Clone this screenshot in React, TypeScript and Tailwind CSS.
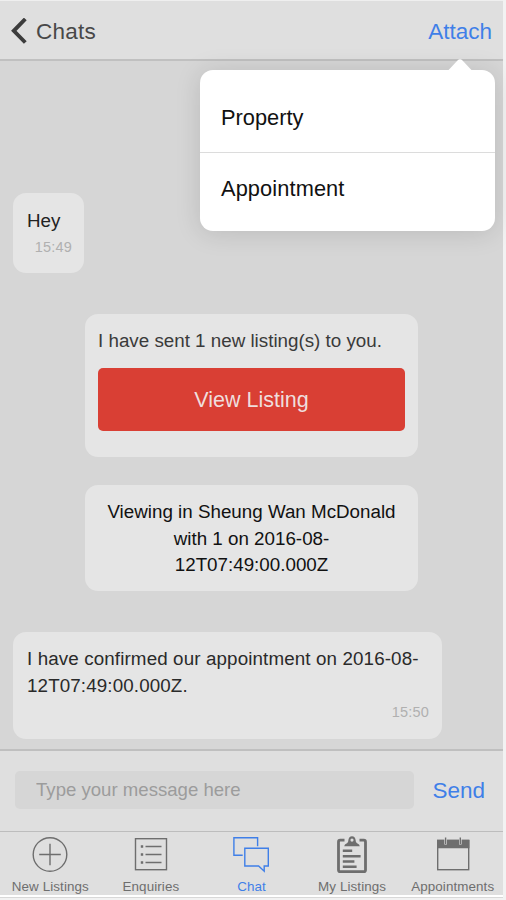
import type { ReactNode } from "react"
import clsx from "clsx"

const tabs = [
  { label: "New Listings", icon: <PlusIcon /> },
  { label: "Enquiries", icon: <ListIcon /> },
  { label: "Chat", icon: <ChatIcon />, active: true },
  { label: "My Listings", icon: <ClipboardIcon /> },
  { label: "Appointments", icon: <CalendarIcon /> },
]

function PlusIcon() {
  return (
    <svg width="36" height="36" viewBox="0 0 36 36" fill="none" stroke="currentColor" strokeWidth="1.4">
      <circle cx="18" cy="17.5" r="16.8" />
      <path d="M18 6.700v21.600M7.200 17.500h21.600" />
    </svg>
  )
}

function ListIcon() {
  return (
    <svg width="36" height="36" viewBox="0 0 36 36" fill="none" stroke="currentColor" strokeWidth="1.4">
      <rect x="2.5" y="1.7" width="31" height="31" />
      <path d="M12.500 9.500h16M12.500 17.500h16M12.500 25.500h16" />
      <path d="M7.800 9.500h2.400M7.800 17.500h2.400M7.800 25.500h2.400" strokeWidth="2.4" />
    </svg>
  )
}

function ChatIcon() {
  return (
    <svg width="36" height="36" viewBox="0 0 36 36" fill="none" stroke="currentColor" strokeWidth="1.4">
      <path d="M9.700 18.200H.9V.7H24.600V9.200" />
      <path d="M11.800 11.300H35.300V29H31.200V34.200L25.600 29H11.800Z" />
    </svg>
  )
}

function ClipboardIcon() {
  return (
    <svg width="36" height="38" viewBox="0 0 36 38" fill="none" stroke="currentColor">
      <path
        d="M10.500 4.200H6.200Q4.500 4.200 4.500 5.900V34Q4.500 35.700 6.200 35.700H29.800Q31.500 35.700 31.500 34V5.900Q31.500 4.200 29.800 4.200H25.500"
        strokeWidth="2.8"
      />
      <path
        d="M10.200 10.200Q10.200 8 13.300 6.900Q14.400 6.300 14.400 4.100Q14.800 .3 18 .3Q21.200 .3 21.600 4.100Q21.600 6.300 22.700 6.900Q25.800 8 25.800 10.200ZM18 2.500A1.600 1.600 0 1 0 18 5.700A1.600 1.600 0 1 0 18 2.500Z"
        fill="currentColor"
        fillRule="evenodd"
        stroke="none"
      />
      <path d="M8.800 14.800H18.200M8.800 20.200H26.600M8.800 25.500H20.400M8.800 30.800H22.600" strokeWidth="2.6" />
    </svg>
  )
}

function CalendarIcon() {
  return (
    <svg width="36" height="36" viewBox="0 0 36 36" fill="none" stroke="currentColor">
      <rect x="2.700" y="3.500" width="31" height="29.200" strokeWidth="1.400" />
      <path d="M2 2.800H34.400V11.300H2Z" fill="currentColor" stroke="none" />
      <path d="M10.600 1.800V7.600M25.300 1.800V7.600" stroke="#dfdfdf" strokeWidth="2.600" />
      <path d="M10.600 .6V6.900M25.300 .6V6.900" strokeWidth="1.400" />
    </svg>
  )
}

function Bubble({ className, children }: { className?: string; children: ReactNode }) {
  return (
    <div className={clsx("rounded-[13px] bg-[#e5e5e5] text-[18.8px] leading-[26.6px]", className)}>
      {children}
    </div>
  )
}

function AttachMenu() {
  return (
    <div className="absolute left-[200px] top-[70px] h-[161px] w-[295px] rounded-[13px] bg-white text-[21.8px] text-[#111] shadow-[0_2px_26px_rgba(0,0,0,0.13)]">
      <svg className="absolute left-[247px] -top-[11px]" width="26" height="12" viewBox="0 0 26 12">
        <path d="M0 12Q1.500 11 3 9.500L10.500 1.500Q13-.8 15.500 1.500L23 9.500Q24.500 11 26 12Z" fill="#fff" />
      </svg>
      <button className="flex h-[83px] w-full items-end border-b border-[#dcdcdc] pb-[19px] pl-[21px] leading-[30px]">Property</button>
      <button className="flex h-[78px] w-full items-center pb-[7px] pl-[21px] leading-[30px] tracking-[0.1px]">Appointment</button>
    </div>
  )
}

export default function App() {
  return (
    <div className="h-[900px] w-[506px] overflow-hidden bg-[#f2f2f2] font-['Liberation_Sans',Arial,sans-serif]">
      <div className="relative flex h-[895px] w-[503px] flex-col bg-[#d6d6d6]">
        <header className="flex h-[61px] items-center justify-between border-b-2 border-t border-b-[#c0c0c0] border-t-[#efefef] bg-[#dfdfdf] pl-[11px] pr-[11px] pt-[3px]">
          <button className="flex items-center gap-[9px] text-[22.5px] tracking-[0.25px] text-[#484848]">
            <svg width="16" height="27" viewBox="0 0 16 27" fill="none" stroke="#3c3c3c" strokeWidth="3.9">
              <path d="M14.300 1L2.800 12.800L14.300 24.500" />
            </svg>
            Chats
          </button>
          <button className="text-[22.5px] text-[#3f7fe8]">Attach</button>
        </header>

        <main className="flex flex-1 flex-col pt-[132px]">
          <Bubble className="ml-[13px] h-20 w-[71px] pl-[14px] pr-[12px] pt-[15px] text-[#222]">
            <p>Hey</p>
            <p className="-mt-px text-right text-[14.5px] tracking-[0.2px] text-[#b0b0b0]">15:49</p>
          </Bubble>

          <Bubble className="mt-[41px] ml-[85px] h-[143px] w-[333px] px-[13px] pt-[14px] text-[#3a3a3a]">
            <p className="whitespace-nowrap">I have sent 1 new listing(s) to you.</p>
            <button className="mt-[13px] h-[63px] w-full rounded-[5px] bg-[#d93f34] pt-[3px] text-[21.5px] text-[#efdedd]">
              View Listing
            </button>
          </Bubble>

          <Bubble className="mt-[28px] ml-[85px] h-[106px] w-[333px] pt-[14px] text-center text-[#111]">
            <p>
              Viewing in Sheung Wan McDonald
              <br />
              with 1 on 2016-08-
              <br />
              12T07:49:00.000Z
            </p>
          </Bubble>

          <Bubble className="mt-[41px] ml-[13px] h-[107px] w-[429px] px-[13px] pt-[14px] text-[#2a2a2a]">
            <p className="whitespace-nowrap pl-px tracking-[0.12px]">
              I have confirmed our appointment on 2016-08-
              <br />
              12T07:49:00.000Z.
            </p>
            <p className="text-right text-[14.5px] tracking-[0.2px] text-[#b0b0b0]">15:50</p>
          </Bubble>
        </main>

        <div className="flex h-[82px] items-center justify-between border-t-2 border-[#bfbfbf] bg-[#dfdfdf] pl-[15px] pr-[18px] pb-[2px]">
          <input
            className="h-[38px] w-[399px] rounded-[5px] bg-[#d6d6d6] pl-[21px] text-[18.6px] placeholder:text-[#9c9c9c]"
            placeholder="Type your message here"
          />
          <button className="pt-px text-[22.5px] text-[#3f7fe8]">Send</button>
        </div>

        <nav className="grid h-[64px] grid-cols-5 border-t border-[#bdbdbd] bg-[#dfdfdf]">
          {tabs.map((tab) => (
            <button
              key={tab.label}
              className={clsx("flex flex-col items-center whitespace-nowrap pt-1", tab.active ? "text-[#3f7fe8]" : "text-[#6e6e6e]")}
            >
              <span className="flex h-[38px] items-center">{tab.icon}</span>
              <span className="mt-[5px] text-[13.4px] leading-[16px] tracking-[0.1px]">{tab.label}</span>
            </button>
          ))}
        </nav>

        <AttachMenu />
      </div>
      <div className="h-[3px] w-[503px] border-b border-[#d8d8d8] bg-white" />
    </div>
  )
}
